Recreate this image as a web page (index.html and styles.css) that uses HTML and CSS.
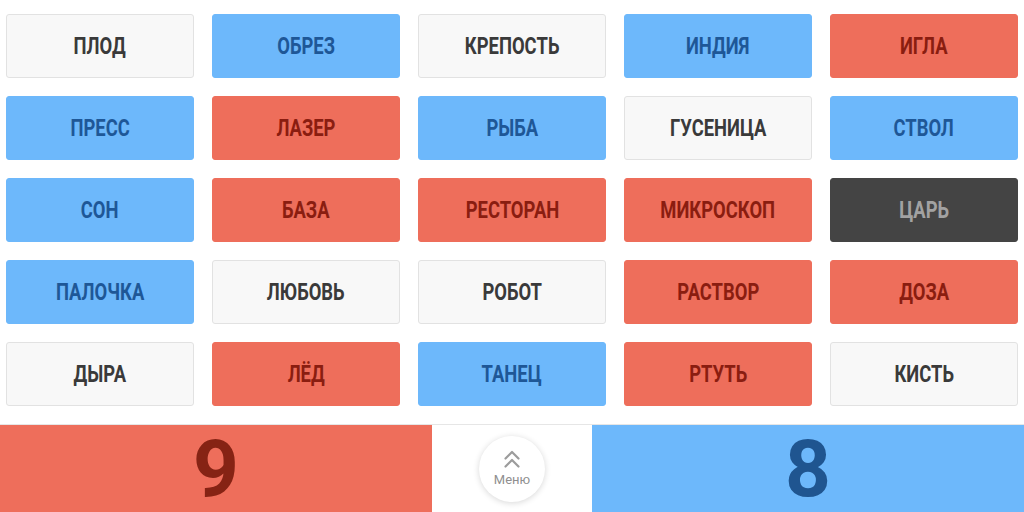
FILE: index.html
```html
<!DOCTYPE html>
<html lang="ru">
<head>
<meta charset="utf-8">
<link rel="stylesheet" href="styles.css">
</head>
<body>
<div class="board">
  <div class="card neutral"><span class="word">ПЛОД</span></div>
  <div class="card blue"><span class="word">ОБРЕЗ</span></div>
  <div class="card neutral"><span class="word">КРЕПОСТЬ</span></div>
  <div class="card blue"><span class="word">ИНДИЯ</span></div>
  <div class="card red"><span class="word">ИГЛА</span></div>
  <div class="card blue"><span class="word">ПРЕСС</span></div>
  <div class="card red"><span class="word">ЛАЗЕР</span></div>
  <div class="card blue"><span class="word">РЫБА</span></div>
  <div class="card neutral"><span class="word">ГУСЕНИЦА</span></div>
  <div class="card blue"><span class="word">СТВОЛ</span></div>
  <div class="card blue"><span class="word">СОН</span></div>
  <div class="card red"><span class="word">БАЗА</span></div>
  <div class="card red"><span class="word">РЕСТОРАН</span></div>
  <div class="card red"><span class="word">МИКРОСКОП</span></div>
  <div class="card dark"><span class="word">ЦАРЬ</span></div>
  <div class="card blue"><span class="word">ПАЛОЧКА</span></div>
  <div class="card neutral"><span class="word">ЛЮБОВЬ</span></div>
  <div class="card neutral"><span class="word">РОБОТ</span></div>
  <div class="card red"><span class="word">РАСТВОР</span></div>
  <div class="card red"><span class="word">ДОЗА</span></div>
  <div class="card neutral"><span class="word">ДЫРА</span></div>
  <div class="card red"><span class="word">ЛЁД</span></div>
  <div class="card blue"><span class="word">ТАНЕЦ</span></div>
  <div class="card red"><span class="word">РТУТЬ</span></div>
  <div class="card neutral"><span class="word">КИСТЬ</span></div>
</div>
<div class="scorebar">
  <div class="score score-red"><span class="num">9</span></div>
  <div class="center">
    <button class="menu">
      <svg width="16" height="19" viewBox="0 0 16 19" fill="none" stroke="#9c9c9c" stroke-width="2.2" stroke-linecap="round" stroke-linejoin="round">
        <path d="M1.5 8.5 L8 2 L14.5 8.5"/>
        <path d="M1.5 16.5 L8 10 L14.5 16.5"/>
      </svg>
      <span class="menu-label">Меню</span>
    </button>
  </div>
  <div class="score score-blue"><span class="num">8</span></div>
</div>
</body>
</html>
```
FILE: styles.css
```css
* { box-sizing: border-box; }
html, body { margin: 0; padding: 0; }
body {
  width: 1024px;
  height: 512px;
  overflow: hidden;
  background: #ffffff;
  font-family: "Roboto", "Liberation Sans", sans-serif;
  display: flex;
  flex-direction: column;
}
.board {
  display: grid;
  grid-template-columns: repeat(5, 188px);
  grid-auto-rows: 64px;
  column-gap: 18px;
  row-gap: 18px;
  padding: 14px 6px 18px 6px;
}
.card {
  display: flex;
  align-items: center;
  justify-content: center;
  border-radius: 3px;
  font-weight: 700;
  font-size: 23px;
  border: 1px solid transparent;
}
.word {
  display: inline-block;
  transform: scaleX(0.8);
  white-space: nowrap;
}
.neutral { background: #f8f8f8; border-color: #e2e2e2; color: #3a3a3a; }
.blue { background: #6db8fb; border-color: #6db8fb; color: #1e5797; }
.red { background: #ee6e5b; border-color: #ee6e5b; color: #8a1d10; }
.dark { background: #444444; border-color: #444444; color: #a2a2a2; }
.scorebar {
  display: flex;
  height: 88px;
  border-top: 1px solid #e6e6e6;
}
.score {
  width: 432px;
  display: flex;
  align-items: center;
  justify-content: center;
  font-weight: 700;
  font-size: 80px;
  line-height: 1;
}
.num {
  display: inline-block;
}
.score-red { background: #ee6e5b; color: #862314; }
.score-blue { background: #6db8fb; color: #1f5590; }
.center {
  flex: 1;
  background: #ffffff;
  display: flex;
  align-items: center;
  justify-content: center;
}
.menu {
  width: 66px;
  height: 66px;
  border-radius: 50%;
  border: none;
  background: #ffffff;
  box-shadow: 0 1px 6px rgba(0,0,0,0.16);
  display: flex;
  flex-direction: column;
  align-items: center;
  justify-content: center;
  gap: 4px;
  padding: 0 0 2px 0;
  font-family: "Roboto", "Liberation Sans", sans-serif;
  color: #8f8f8f;
}
.menu-label {
  font-size: 13px;
  line-height: 1;
}
```
